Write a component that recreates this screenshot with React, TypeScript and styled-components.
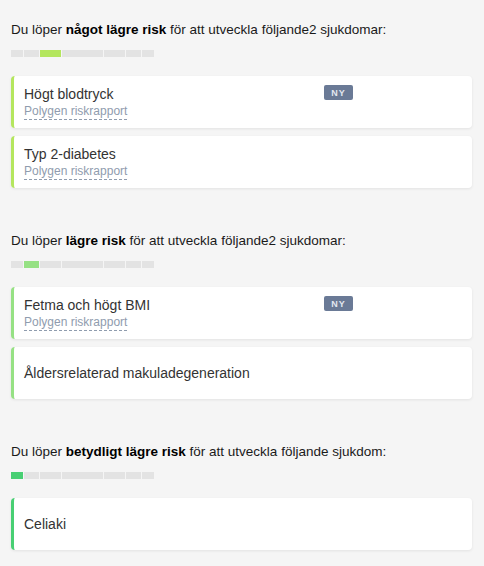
import React from "react";
import styled, { createGlobalStyle } from "styled-components";

interface Sjukdom {
  namn: string;
  ny?: boolean;
  rapport?: boolean;
}

interface Grupp {
  niva: string;
  slut: string;
  steg: number;
  farg: string;
  sjukdomar: Sjukdom[];
}

const GlobalStyle = createGlobalStyle`
  html, body {
    margin: 0;
    padding: 0;
    background: #f5f5f5;
  }
  body {
    font-family: "Liberation Sans", Arial, sans-serif;
  }
`;

const Page = styled.div`
  padding: 20px 12px 20px 11px;
  display: flex;
  flex-direction: column;
  gap: 43px;
`;

const Section = styled.section`
  display: flex;
  flex-direction: column;
`;

const Rubrik = styled.p`
  margin: 0;
  font-size: 13.5px;
  line-height: 20px;
  color: #1a1a1a;

  b {
    color: #000;
  }
`;

const Skala = styled.div`
  display: flex;
  gap: 1px;
  margin: 10px 0 19px;
  height: 7px;
`;

const Steg = styled.div<{ $w: number; $farg?: string }>`
  width: ${(p) => p.$w}px;
  background: ${(p) => p.$farg ?? "#e3e3e3"};
`;

const Lista = styled.div`
  display: flex;
  flex-direction: column;
  gap: 8px;
`;

const Kort = styled.div<{ $farg: string }>`
  background: #fff;
  border-left: 3px solid ${(p) => p.$farg};
  border-radius: 4px;
  box-shadow: 0 1px 3px rgba(0, 0, 0, 0.08);
  min-height: 52px;
  box-sizing: border-box;
  padding: 8px 10px 8px 10px;
  display: grid;
  grid-template-columns: 300px auto;
  align-items: center;
`;

const Info = styled.div`
  display: flex;
  flex-direction: column;
  gap: 1px;
`;

const Namn = styled.div`
  font-size: 14px;
  line-height: 18px;
  color: #333;
`;

const Rapport = styled.span`
  align-self: flex-start;
  font-size: 12px;
  line-height: 15px;
  color: #8f9cae;
  border-bottom: 1px dashed #8f9cae;
`;

const Ny = styled.span`
  align-self: start;
  margin-top: 1px;
  width: 29px;
  height: 15px;
  border-radius: 2px;
  background: #6a7a96;
  color: #e3e8f0;
  font-size: 9px;
  font-weight: bold;
  letter-spacing: 1px;
  display: flex;
  align-items: center;
  justify-content: center;
`;

const bredder = [12, 15, 21, 41, 21, 15, 12];

const grupper: Grupp[] = [
  {
    niva: "något lägre risk",
    slut: "följande2 sjukdomar:",
    steg: 2,
    farg: "#b4e65e",
    sjukdomar: [
      { namn: "Högt blodtryck", ny: true, rapport: true },
      { namn: "Typ 2-diabetes", rapport: true },
    ],
  },
  {
    niva: "lägre risk",
    slut: "följande2 sjukdomar:",
    steg: 1,
    farg: "#96e184",
    sjukdomar: [
      { namn: "Fetma och högt BMI", ny: true, rapport: true },
      { namn: "Åldersrelaterad makuladegeneration" },
    ],
  },
  {
    niva: "betydligt lägre risk",
    slut: "följande sjukdom:",
    steg: 0,
    farg: "#48cf73",
    sjukdomar: [{ namn: "Celiaki" }],
  },
];

const App: React.FC = () => {
  return (
    <>
      <GlobalStyle />
      <Page>
        {grupper.map((g) => (
          <Section key={g.niva}>
            <Rubrik>
              Du löper <b>{g.niva}</b> för att utveckla {g.slut}
            </Rubrik>
            <Skala>
              {bredder.map((w, i) => (
                <Steg key={i} $w={w} $farg={i === g.steg ? g.farg : undefined} />
              ))}
            </Skala>
            <Lista>
              {g.sjukdomar.map((s) => (
                <Kort key={s.namn} $farg={g.farg}>
                  <Info>
                    <Namn>{s.namn}</Namn>
                    {s.rapport && <Rapport>Polygen riskrapport</Rapport>}
                  </Info>
                  {s.ny && <Ny>NY</Ny>}
                </Kort>
              ))}
            </Lista>
          </Section>
        ))}
      </Page>
    </>
  );
};

export default App;
